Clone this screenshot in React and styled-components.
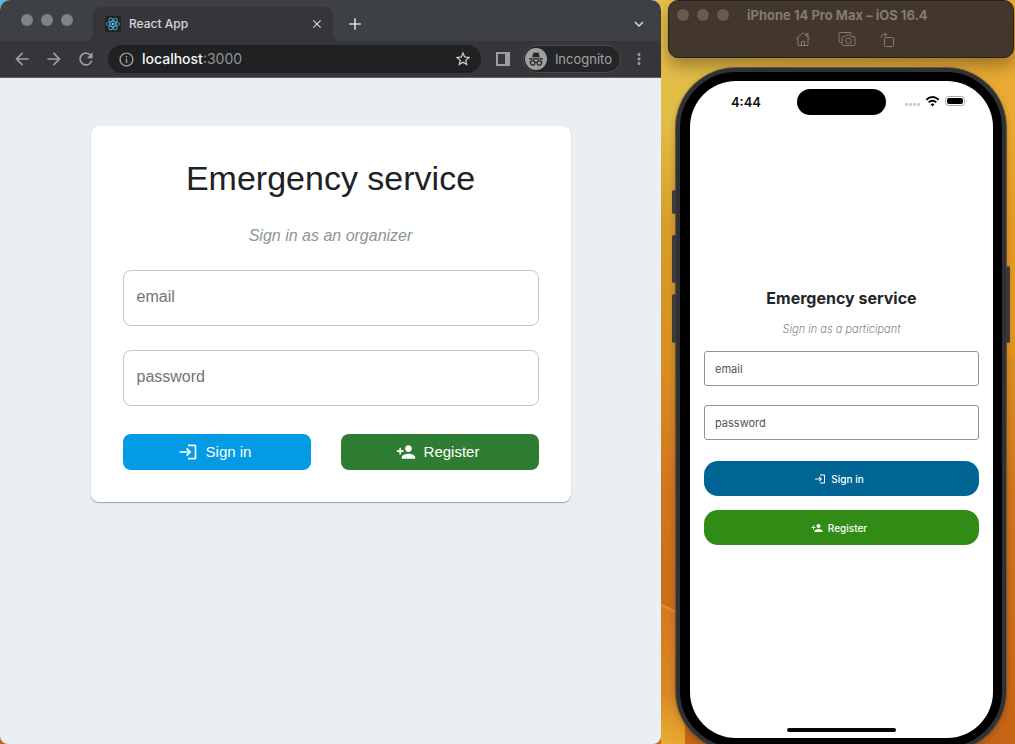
import React from "react";
import styled, { createGlobalStyle } from "styled-components";
import {
  MdAdd,
  MdArrowBack,
  MdArrowForward,
  MdClose,
  MdInfoOutline,
  MdKeyboardArrowDown,
  MdLogin,
  MdMoreVert,
  MdPersonAdd,
  MdRefresh,
  MdStarBorder,
} from "react-icons/md";

const GlobalStyle = createGlobalStyle`
  *, *::before, *::after { box-sizing: border-box; }
  body { margin: 0; font-family: Inter, "Liberation Sans", sans-serif; }
  button, input { font: inherit; }
  h1, h2, p { margin: 0; }
`;

const Desktop = styled.main`
  display: grid;
  grid-template-columns: minmax(0, 1fr) 354px;
  min-height: 100vh;
  overflow: hidden;
  background:
    linear-gradient(180deg, #5fb4e0 0 12px, transparent 12px) 0 0 / 12px 12px no-repeat,
    linear-gradient(207deg, transparent 15px, #dd9a38 15px, #d4791f 18px, #d88723 90px, #e9ae33 140px) calc(100% - 330px) 100% / 24px 145px no-repeat,
    linear-gradient(90deg, transparent 70%, rgba(240, 150, 30, 0.5) 100%) 0 0 / 100% 48% no-repeat,
    linear-gradient(180deg, #e4c04a 0%, #e2bd47 16%, #d69d2c 30%, #d88c22 50%, #d0751d 66%, #c66314 100%);
`;

/* Browser window */

const BrowserWindow = styled.section`
  display: flex;
  flex-direction: column;
  overflow: hidden;
  border-radius: 10px 10px 8px 8px;
  background: #e9eff2;
`;

const TabStrip = styled.header`
  display: flex;
  align-items: flex-end;
  height: 41px;
  padding-right: 10px;
  background: #3d4143;
  color: #d6d6d6;
`;

const Lights = styled.div`
  display: flex;
  gap: 8px;
  padding: ${({ $inset }) => $inset};
`;

const Light = styled.span`
  width: 12px;
  height: 12px;
  border-radius: 50%;
  background: ${({ $color }) => $color};
`;

const Tab = styled.div`
  position: relative;
  display: flex;
  align-items: center;
  flex: 0 1 240px;
  gap: 8px;
  height: 34px;
  padding: 0 8px 0 12px;
  border-radius: 8px 8px 0 0;
  background: #36363a;
  font-size: 12px;
  line-height: 16px;

  &::before, &::after {
    content: "";
    position: absolute;
    bottom: 0;
    width: 8px;
    height: 8px;
  }
  &::before {
    left: -8px;
    background: radial-gradient(circle at 0 0, transparent 8px, #36363a 8px);
  }
  &::after {
    right: -8px;
    background: radial-gradient(circle at 100% 0, transparent 8px, #36363a 8px);
  }
`;

const TabTitle = styled.span`
  flex: 1;
  font-weight: 500;
`;

const IconButton = styled.button`
  display: grid;
  place-items: center;
  flex: none;
  width: ${({ $size }) => $size || 20}px;
  height: ${({ $size }) => $size || 20}px;
  padding: 0;
  border: 0;
  background: none;
  color: inherit;
  cursor: pointer;
`;

const StripActions = styled.div`
  display: flex;
  flex: 1;
  align-items: center;
  justify-content: space-between;
  height: 34px;
  padding-left: 12px;
`;

const Toolbar = styled.nav`
  display: flex;
  align-items: center;
  height: 37px;
  padding: 0 12px;
  border-bottom: 1px solid #606164;
  background: #36363a;
  color: #9c9da0;
`;

const NavButtons = styled.div`
  display: flex;
  gap: 12px;
  padding-right: 12px;
`;

const AddressBar = styled.div`
  display: flex;
  flex: 1;
  align-items: center;
  gap: 8px;
  height: 28px;
  min-width: 0;
  margin-right: 12px;
  padding: 0 8px 0 10px;
  border-radius: 14px;
  background: #202123;
`;

const Address = styled.div`
  flex: 1;
  color: #929396;
  font-size: 14px;
  line-height: 20px;
  outline: none;
`;

const Host = styled.span`
  color: #f5f5f5;
  font-weight: 500;
`;

const IncognitoChip = styled.button`
  display: flex;
  align-items: center;
  gap: 8px;
  height: 28px;
  margin: 0 8px 0 10px;
  padding: 0 8px 0 1px;
  border: 1px solid #4c4a48;
  border-radius: 14px;
  background: #252628;
  color: #a3a4a6;
  font-size: 13px;
  line-height: 20px;
`;

const WebPage = styled.div`
  flex: 1;
  padding: 48px 24px;
  font-family: "Liberation Sans", Arial, sans-serif;
`;

const WebCard = styled.form`
  display: flex;
  flex-direction: column;
  width: 100%;
  max-width: 480px;
  margin: 0 auto;
  padding: 32px;
  border-radius: 8px;
  background: #fff;
  box-shadow: 0 1px 1px #9ca3a5, 0 0 1px #c5cccf;
`;

const WebTitle = styled.h1`
  color: #202123;
  font-size: 34px;
  font-weight: 400;
  line-height: 40px;
  text-align: center;
`;

const WebSubtitle = styled.p`
  margin: 26px 0 22px;
  color: #8c9596;
  font-size: 16px;
  font-style: italic;
  line-height: 24px;
  text-align: center;
`;

const WebInput = styled.input`
  width: 100%;
  height: 56px;
  margin-bottom: 24px;
  padding: 0 13px 2px;
  border: 1px solid #c4c6c6;
  border-radius: 8px;
  background: #fff;
  color: #202123;
  font-size: 16px;

  &::placeholder { color: #707475; opacity: 1; }
`;

const WebActions = styled.div`
  display: flex;
  gap: 30px;
  padding-top: 4px;
`;

const WebButton = styled.button`
  display: flex;
  flex: 1 1 auto;
  align-items: center;
  justify-content: center;
  gap: 8px;
  height: 36px;
  padding: 0 18px 0 14px;
  border: 0;
  border-radius: 8px;
  background: ${({ $color }) => $color};
  color: #fff;
  font-size: 15px;
  line-height: 24px;
`;

/* Simulator */

const Simulator = styled.section`
  display: flex;
  flex-direction: column;
  min-width: 0;
`;

const SimulatorBar = styled.header`
  display: flex;
  flex-direction: column;
  height: 58px;
  margin: 0 1px 10px 7px;
  border: 1px solid #24201e;
  border-radius: 10px;
  background: #43362a;
  color: #817b76;
  box-shadow: 0 8px 16px rgba(90, 60, 20, 0.5);
`;

const SimulatorTitleRow = styled.div`
  display: flex;
  align-items: center;
  gap: 18px;
  height: 28px;
`;

const SimulatorTitle = styled.h2`
  font-size: 13px;
  font-weight: 700;
  line-height: 20px;
  white-space: nowrap;
`;

const SimulatorTools = styled.div`
  display: flex;
  align-items: center;
  gap: 24px;
  padding-left: 124px;
`;

const PhoneFrame = styled.div`
  position: relative;
  display: flex;
  flex: 1;
  margin: 0 9px -7px 15px;
  padding: 9px 9px 9px 10px;
  border: 4px solid #2f3135;
  border-radius: 60px;
  background: #000;
  box-shadow: 0 0 0 1px #665640, 0 2px 6px rgba(60, 40, 10, 0.4);
`;

const SideKey = styled.span`
  position: absolute;
  top: ${({ $top }) => $top}px;
  ${({ $side }) => $side}: -8px;
  width: 4px;
  height: ${({ $length }) => $length}px;
  border-radius: 2px;
  background: #3a3a3b;
`;

const PhoneScreen = styled.div`
  display: flex;
  flex: 1;
  flex-direction: column;
  min-width: 0;
  border-radius: 46px;
  background: #fff;
`;

const StatusBar = styled.header`
  display: grid;
  grid-template-columns: 1fr 89px 1fr;
  align-items: center;
  height: 42px;
`;

const Clock = styled.time`
  padding-right: 36px;
  color: #111;
  font-size: 13px;
  font-weight: 600;
  line-height: 16px;
  text-align: right;
`;

const Island = styled.span`
  height: 26px;
  border-radius: 13px;
  background: #000;
`;

const StatusIcons = styled.span`
  display: flex;
  padding-left: 18px;
`;

const PhoneForm = styled.form`
  display: flex;
  flex: 1;
  flex-direction: column;
  justify-content: center;
  padding: 0 14px;
`;

const PhoneTitle = styled.h2`
  color: #222528;
  font-size: 16px;
  font-weight: 700;
  line-height: 24px;
  text-align: center;
`;

const PhoneSubtitle = styled.p`
  margin: 11px 0 14px;
  color: #7f898a;
  font-size: 11px;
  font-style: italic;
  font-weight: 300;
  line-height: 16px;
  text-align: center;
`;

const PhoneInput = styled.input`
  width: 100%;
  height: 35px;
  margin-bottom: 19px;
  padding: 0 10px;
  border: 1px solid #909396;
  border-radius: 3px;
  background: #fff;
  color: #222528;
  font-size: 11px;

  &::placeholder { color: #515456; opacity: 1; }
`;

const PhoneActions = styled.div`
  display: flex;
  flex-direction: column;
  gap: 14px;
  padding-top: 2px;
`;

const PhoneButton = styled.button`
  display: flex;
  align-items: center;
  justify-content: center;
  gap: 5px;
  height: 35px;
  padding: 0 17px 0 12px;
  border: 0;
  border-radius: 14px;
  background: ${({ $color }) => $color};
  color: #fff;
  font-size: 10px;
  font-weight: 500;
  line-height: 16px;
`;

const HomeArea = styled.footer`
  display: flex;
  align-items: flex-end;
  justify-content: center;
  height: 30px;
  padding-bottom: 6px;
`;

const HomeIndicator = styled.span`
  width: 109px;
  height: 4px;
  border-radius: 2px;
  background: #050505;
`;

function WindowLights({ inset, color }) {
  return (
    <Lights $inset={inset}>
      <Light $color={color} />
      <Light $color={color} />
      <Light $color={color} />
    </Lights>
  );
}

function ReactLogo() {
  return (
    <svg width="16" height="16" viewBox="0 0 16 16" aria-hidden="true">
      <rect width="16" height="16" rx="2" fill="#1f2225" />
      <g fill="none" stroke="#4fa9cc" strokeWidth="0.9">
        <ellipse cx="8" cy="8" rx="6.6" ry="2.6" />
        <ellipse cx="8" cy="8" rx="6.6" ry="2.6" transform="rotate(60 8 8)" />
        <ellipse cx="8" cy="8" rx="6.6" ry="2.6" transform="rotate(120 8 8)" />
      </g>
      <circle cx="8" cy="8" r="1.3" fill="#61c8ee" />
    </svg>
  );
}

function SidePanelIcon() {
  return (
    <svg width="14" height="14" viewBox="0 0 14 14" aria-hidden="true">
      <path fill="currentColor" fillRule="evenodd" d="M0 0h14v14H0zM2 2v10h7V2z" />
    </svg>
  );
}

function IncognitoIcon() {
  return (
    <svg width="22" height="22" viewBox="0 0 22 22" aria-hidden="true">
      <circle cx="11" cy="11" r="11" fill="#a09f9f" />
      <path fill="#252628" d="M7.2 9.2 8.3 5.2Q8.6 4.3 9.5 4.6L11 5l1.5-.4q.9-.3 1.2.6l1.1 4zM4 10.2h14v1.2H4z" />
      <g fill="none" stroke="#252628" strokeWidth="1.2">
        <circle cx="7.7" cy="14.9" r="2.2" />
        <circle cx="14.3" cy="14.9" r="2.2" />
        <path d="M9.9 14.6q1.1-.7 2.2 0M5.5 14.2l-1-.3M16.5 14.2l1-.3" />
      </g>
    </svg>
  );
}

function HomeIcon() {
  return (
    <svg width="16" height="16" viewBox="0 0 16 16" fill="none" stroke="currentColor" aria-hidden="true">
      <path d="m1 8.2 7-6.4 7 6.4M3 6.8v7.7h10V6.8M11.5 4.8V2.5H13v3.7" />
      <path d="M6.5 14.5v-4h3v4" />
    </svg>
  );
}

function ScreenshotIcon() {
  return (
    <svg width="18" height="16" viewBox="0 0 18 16" fill="none" stroke="currentColor" aria-hidden="true">
      <path d="M3.5 11.5h-1q-1.500 0-1.500-1.500V3q0-1.500 1.500-1.500h9.500q1.500 0 1.500 1.500" />
      <path d="M5.500 5.500h2l1-1.500h4l1 1.500H16q1 0 1 1V13q0 1.500-1.500 1.500h-10Q4 14.500 4 13V7q0-1.500 1.500-1.500z" />
      <circle cx="10.500" cy="9.800" r="2.800" />
    </svg>
  );
}

function RotateIcon() {
  return (
    <svg width="14" height="16" viewBox="1 0 14 16" fill="none" stroke="currentColor" aria-hidden="true">
      <rect x="4.500" y="5.500" width="9" height="9" rx="1" />
      <path d="M1.500 6V4.500q0-2 2-2h3M4.800.6l1.900 1.900-1.900 1.900" />
    </svg>
  );
}

function StatusGlyphs() {
  return (
    <svg width="64" height="14" viewBox="0 0 64 14" role="img" aria-label="Wi-Fi, battery full">
      <g fill="#c9cbcc">
        <rect x="1" y="8" width="3" height="3" rx="1" />
        <rect x="5" y="8" width="3" height="3" rx="1" />
        <rect x="9" y="8" width="3" height="3" rx="1" />
        <rect x="13" y="8" width="3" height="3" rx="1" />
      </g>
      <g fill="none" stroke="#000" strokeWidth="1.800">
        <path d="M22.300 4.700q6.200-5.400 12.400 0" />
        <path d="M24.700 7.300q3.800-3.200 7.600 0" />
      </g>
      <path d="m28.500 11.400-2-2.100q2-1.600 4 0z" fill="#000" />
      <rect x="41.500" y="1.500" width="19" height="9" rx="3" fill="none" stroke="#a8abad" />
      <rect x="43" y="3" width="16" height="6" rx="2" fill="#000" />
      <path d="M62 4.500q1.500 1.500 0 3z" fill="#a8abad" />
    </svg>
  );
}

const stop = (event) => event.preventDefault();

export default function App() {
  return (
    <>
      <GlobalStyle />
      <Desktop>
        <BrowserWindow aria-label="Browser">
          <TabStrip>
            <WindowLights inset="0 20px 15px 21px" color="#828282" />
            <Tab>
              <ReactLogo />
              <TabTitle>React App</TabTitle>
              <IconButton $size={16} aria-label="Close tab">
                <MdClose size={14} />
              </IconButton>
            </Tab>
            <StripActions>
              <IconButton aria-label="New tab">
                <MdAdd size={20} />
              </IconButton>
              <IconButton $size={24} aria-label="Search tabs">
                <MdKeyboardArrowDown size={18} />
              </IconButton>
            </StripActions>
          </TabStrip>
          <Toolbar>
            <NavButtons>
              <IconButton aria-label="Back"><MdArrowBack size={20} /></IconButton>
              <IconButton aria-label="Forward"><MdArrowForward size={20} /></IconButton>
              <IconButton aria-label="Reload"><MdRefresh size={20} /></IconButton>
            </NavButtons>
            <AddressBar>
              <IconButton $size={16} aria-label="Site information"><MdInfoOutline size={17} /></IconButton>
              <Address role="textbox" aria-label="Address" contentEditable suppressContentEditableWarning>
                <Host>localhost</Host>:3000
              </Address>
              <IconButton aria-label="Bookmark"><MdStarBorder size={18} color="#d0d0d0" /></IconButton>
            </AddressBar>
            <IconButton aria-label="Side panel"><SidePanelIcon /></IconButton>
            <IncognitoChip type="button">
              <IncognitoIcon />
              Incognito
            </IncognitoChip>
            <IconButton aria-label="Menu"><MdMoreVert size={18} /></IconButton>
          </Toolbar>
          <WebPage>
            <WebCard onSubmit={stop}>
              <WebTitle>Emergency service</WebTitle>
              <WebSubtitle>Sign in as an organizer</WebSubtitle>
              <WebInput type="email" placeholder="email" aria-label="email" />
              <WebInput type="password" placeholder="password" aria-label="password" />
              <WebActions>
                <WebButton type="submit" $color="#039be5"><MdLogin size={20} />Sign in</WebButton>
                <WebButton type="button" $color="#2e7d32"><MdPersonAdd size={20} />Register</WebButton>
              </WebActions>
            </WebCard>
          </WebPage>
        </BrowserWindow>

        <Simulator aria-label="Simulator">
          <SimulatorBar>
            <SimulatorTitleRow>
              <WindowLights inset="0 0 0 8px" color="#655b50" />
              <SimulatorTitle>iPhone 14 Pro Max – iOS 16.4</SimulatorTitle>
            </SimulatorTitleRow>
            <SimulatorTools>
              <IconButton aria-label="Home"><HomeIcon /></IconButton>
              <IconButton aria-label="Screenshot"><ScreenshotIcon /></IconButton>
              <IconButton $size={14} aria-label="Rotate"><RotateIcon /></IconButton>
            </SimulatorTools>
          </SimulatorBar>
          <PhoneFrame>
            <SideKey $side="left" $top={118} $length={24} />
            <SideKey $side="left" $top={163} $length={48} />
            <SideKey $side="left" $top={222} $length={49} />
            <SideKey $side="right" $top={194} $length={77} />
            <PhoneScreen>
              <StatusBar>
                <Clock>4:44</Clock>
                <Island />
                <StatusIcons><StatusGlyphs /></StatusIcons>
              </StatusBar>
              <PhoneForm onSubmit={stop}>
                <PhoneTitle>Emergency service</PhoneTitle>
                <PhoneSubtitle>Sign in as a participant</PhoneSubtitle>
                <PhoneInput type="email" placeholder="email" aria-label="email" />
                <PhoneInput type="password" placeholder="password" aria-label="password" />
                <PhoneActions>
                  <PhoneButton type="submit" $color="#006495"><MdLogin size={12} />Sign in</PhoneButton>
                  <PhoneButton type="button" $color="#308c15"><MdPersonAdd size={12} />Register</PhoneButton>
                </PhoneActions>
              </PhoneForm>
              <HomeArea><HomeIndicator /></HomeArea>
            </PhoneScreen>
          </PhoneFrame>
        </Simulator>
      </Desktop>
    </>
  );
}
